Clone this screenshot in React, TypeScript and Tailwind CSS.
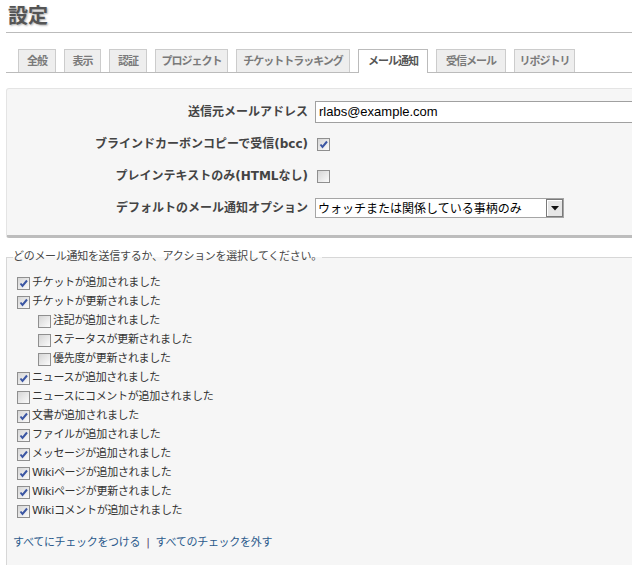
import React from 'react';

const tabs = [
    { label: '全般', w: 'w-[38px]' },
    { label: '表示', w: 'w-[37px]' },
    { label: '認証', w: 'w-[38px]' },
    { label: 'プロジェクト', w: 'w-[73px]' },
    { label: 'チケットトラッキング', w: 'w-[114px]' },
    { label: 'メール通知', w: 'w-[70px]', selected: true },
    { label: '受信メール', w: 'w-[70px]' },
    { label: 'リポジトリ', w: 'w-[61px]' },
];

const notifications = [
    { label: 'チケットが追加されました', checked: true },
    { label: 'チケットが更新されました', checked: true },
    { label: '注記が追加されました', checked: false, sub: true },
    { label: 'ステータスが更新されました', checked: false, sub: true },
    { label: '優先度が更新されました', checked: false, sub: true },
    { label: 'ニュースが追加されました', checked: true },
    { label: 'ニュースにコメントが追加されました', checked: false },
    { label: '文書が追加されました', checked: true },
    { label: 'ファイルが追加されました', checked: true },
    { label: 'メッセージが追加されました', checked: true },
    { label: 'Wikiページが追加されました', checked: true },
    { label: 'Wikiページが更新されました', checked: true },
    { label: 'Wikiコメントが追加されました', checked: true },
];

function Check({ checked }: { checked: boolean }) {
    return (
        <span className="inline-flex h-[13px] w-[13px] shrink-0 items-center justify-center border border-[#8f8f8f] bg-linear-to-br from-[#d6d6d6] to-[#fbfbfb]">
            {checked && (
                <svg width="11" height="11" viewBox="0 0 11 11">
                    <path d="M2.5 5.5 L4.5 8 L9 2.5" stroke="#3b56a3" strokeWidth="2" fill="none" />
                </svg>
            )}
        </span>
    );
}

export default function App() {
    return (
        <div className="h-[565px] w-[632px] overflow-hidden bg-white pl-[6px] font-['DejaVu_Sans','Noto_Sans_CJK_JP',sans-serif]">
            <h2 className="h-[33px] border-b border-[#bbb] pl-[2px] text-[20px] leading-[32px] font-bold text-[#555] [text-shadow:1px_1px_2px_#aaa]">
                設定
            </h2>

            {/* tabs */}
            <div className="flex h-[40px] items-end gap-[8px] border-b border-[#bbb] pl-[12px]">
                {tabs.map((t) =>
                    t.selected ? (
                        <div
                            key={t.label}
                            className={`relative z-10 mb-[-1px] flex h-[24px] ${t.w} items-start justify-center border border-b-0 border-[#bbb] bg-white pt-[4px] text-[11px] font-bold tracking-[-1px] text-[#555]`}
                        >
                            {t.label}
                        </div>
                    ) : (
                        <div
                            key={t.label}
                            className={`flex h-[23px] ${t.w} items-start justify-center border border-b-0 border-[#ccc] bg-[#eee] pt-[4px] text-[11px] font-bold tracking-[-1px] text-[#7a7a7a]`}
                        >
                            {t.label}
                        </div>
                    )
                )}
            </div>

            {/* settings box */}
            <div className="mt-[15px] w-[720px] rounded-[3px] border border-b-[3px] border-[#e4e4e4] border-b-[#bdbdbd] bg-[#f6f6f6] pt-[7px] pb-[11px] text-[12px] font-bold text-[#444]">
                <div className="flex h-[32px] items-center">
                    <div className="w-[301px] text-right">送信元メールアドレス</div>
                    <div className="ml-[7px] flex h-[22px] w-[400px] items-center border border-[#a0a0a0] bg-white pl-[3px] font-['Liberation_Sans',sans-serif] text-[13px] font-normal text-black">
                        rlabs@example.com
                    </div>
                </div>
                <div className="flex h-[32px] items-center">
                    <div className="w-[301px] text-right">ブラインドカーボンコピーで受信(bcc)</div>
                    <div className="ml-[9px] flex">
                        <Check checked />
                    </div>
                </div>
                <div className="flex h-[32px] items-center">
                    <div className="w-[301px] text-right">プレインテキストのみ(HTMLなし)</div>
                    <div className="ml-[9px] flex">
                        <Check checked={false} />
                    </div>
                </div>
                <div className="flex h-[32px] items-center">
                    <div className="w-[301px] text-right">デフォルトのメール通知オプション</div>
                    <div className="ml-[7px] flex h-[20px] w-[249px] items-center justify-between border border-[#a5a5a5] bg-white pl-[2px] text-[12px] font-normal text-black">
                        <span className="font-['Noto_Sans_CJK_JP',sans-serif]">ウォッチまたは関係している事柄のみ</span>
                        <span className="flex h-[18px] w-[17px] items-center justify-center border border-[#7a7a7a] bg-[#e6e6e6] shadow-[inset_1px_1px_0_#fff]">
                            <svg width="8" height="5" viewBox="0 0 8 5">
                                <path d="M0 0 H8 L4 4.5 Z" fill="#111" />
                            </svg>
                        </span>
                    </div>
                </div>
            </div>

            {/* notifications fieldset */}
            <fieldset className="mt-[12px] w-[720px] border border-[#d7d7d7] bg-[#f6f6f6] pl-[6px] text-[11px] text-[#333]">
                <legend className="text-[11px] leading-[14px] tracking-[-0.3px] text-[#484848]">
                    どのメール通知を送信するか、アクションを選択してください。
                </legend>
                <div className="mt-[10px] flex flex-col">
                    {notifications.map((n) => (
                        <label
                            key={n.label}
                            className={`flex h-[19px] items-center gap-[2px] tracking-[-0.3px] ${n.sub ? 'pl-[25px]' : 'pl-[4px]'}`}
                        >
                            <Check checked={n.checked} />
                            <span>{n.label}</span>
                        </label>
                    ))}
                </div>
                <div className="mt-[22px] flex h-[16px] items-center gap-[6px] pb-[40px] tracking-[-0.3px]">
                    <a className="text-[#2b5a8c]">すべてにチェックをつける</a>
                    <span className="text-[#5a4a70]">|</span>
                    <a className="text-[#2b5a8c]">すべてのチェックを外す</a>
                </div>
            </fieldset>
        </div>
    );
}
